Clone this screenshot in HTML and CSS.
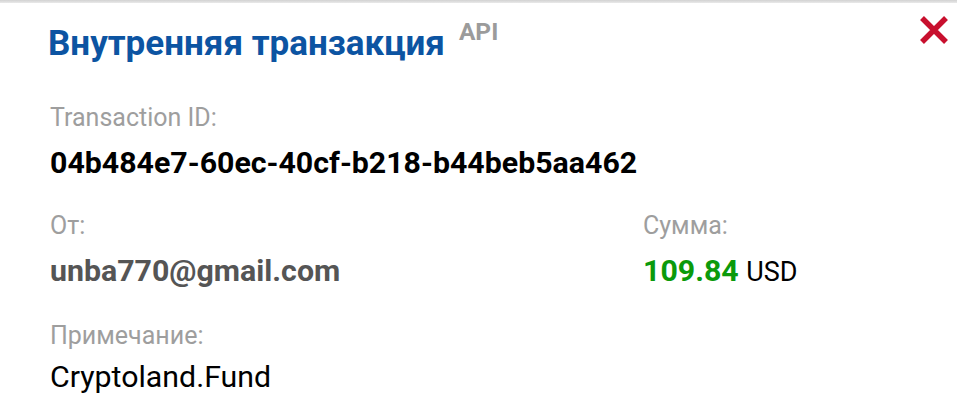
FILE: index.html
```html
<!DOCTYPE html>
<html lang="ru">
<head>
<meta charset="utf-8">
<title>Внутренняя транзакция</title>
<link rel="stylesheet" href="styles.css">
</head>
<body>
<div class="modal">
  <div class="topbar"></div>
  <button class="close" aria-label="Закрыть">
    <svg width="30" height="28" viewBox="0 0 30 28"><path d="M3 2 L27 26 M27 2 L3 26" stroke="#c8102e" stroke-width="5.5" fill="none"/></svg>
  </button>
  <div class="content">
    <div class="title-row">
      <h1 class="title">Внутренняя транзакция</h1>
      <span class="badge">API</span>
    </div>
    <div class="field">
      <div class="label">Transaction ID:</div>
      <div class="value id">04b484e7-60ec-40cf-b218-b44beb5aa462</div>
    </div>
    <div class="row">
      <div class="field">
        <div class="label">От:</div>
        <div class="value email">unba770@gmail.com</div>
      </div>
      <div class="field">
        <div class="label">Сумма:</div>
        <div class="value"><span class="amount">109.84</span> <span class="currency">USD</span></div>
      </div>
    </div>
    <div class="field">
      <div class="label">Примечание:</div>
      <div class="value note">Cryptoland.Fund</div>
    </div>
  </div>
</div>
</body>
</html>
```
FILE: styles.css
```css
html, body {
  margin: 0;
  padding: 0;
  background: #ffffff;
}
body {
  font-family: Roboto, "Noto Sans", "Liberation Sans", sans-serif;
  width: 957px;
  height: 410px;
  overflow: hidden;
}
.modal {
  position: relative;
  height: 410px;
}
.topbar {
  height: 3px;
  background: linear-gradient(#d2d2d2, #e9e9e9);
}
.close {
  position: absolute;
  top: 16px;
  right: 8px;
  border: 0;
  background: none;
  padding: 0;
  width: 30px;
  height: 28px;
  display: flex;
}
.content {
  padding: 17px 0 0 50px;
}
.title-row {
  display: flex;
  align-items: flex-start;
}
.title {
  margin: 4px 0 0 -2px;
  font-size: 35px;
  line-height: 40px;
  font-weight: 700;
  color: #0c54a2;
}
.badge {
  margin-left: 14px;
  font-size: 24.5px;
  line-height: 24px;
  font-weight: 700;
  color: #9b9b9b;
}
.field {
  margin-top: 39px;
}
.row .field {
  margin-top: 0;
}
.row {
  display: grid;
  grid-template-columns: 593px 1fr;
  margin-top: 32px;
}
.row + .field {
  margin-top: 32px;
}
.label {
  font-size: 25px;
  line-height: 30px;
  color: #9e9e9e;
  margin-bottom: 13px;
}
.value {
  font-size: 30.3px;
  line-height: 33px;
  color: #000;
}
.id {
  font-weight: 700;
  margin-top: 1px;
}
.email {
  font-weight: 700;
  color: #555555;
}
.amount {
  font-weight: 700;
  color: #0b9a0b;
}
.currency {
  font-size: 27px;
}
.note {
  margin-top: -4px;
}
```
